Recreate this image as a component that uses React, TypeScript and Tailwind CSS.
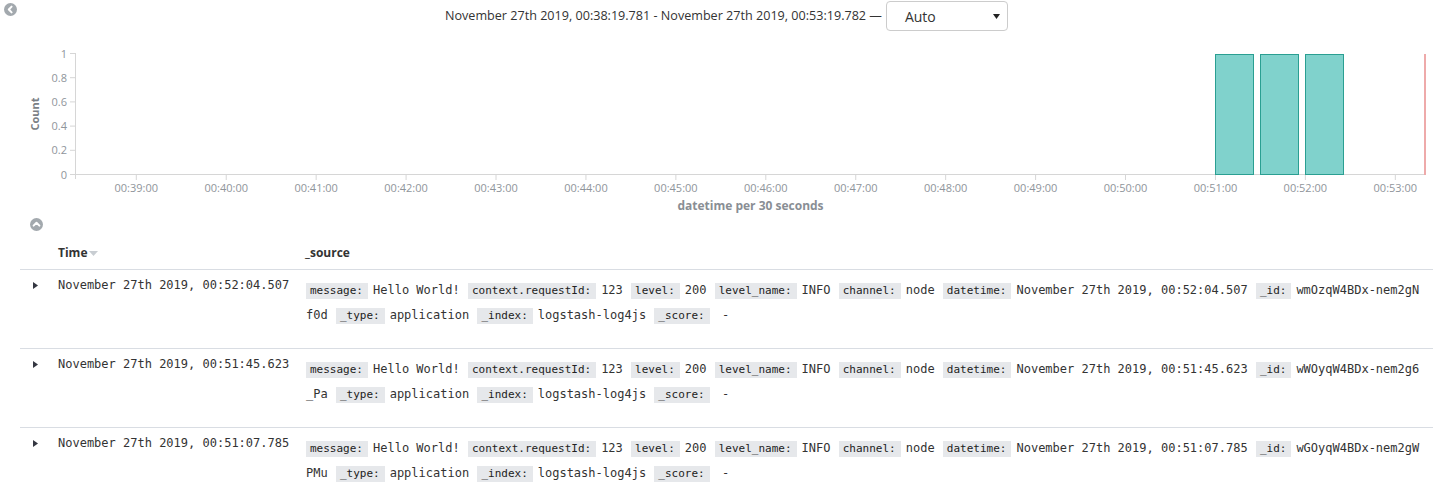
import React from "react";

const SANS = { fontFamily: '"Open Sans", "Noto Sans", Arial, sans-serif' } as const;

type Row = { time: string; id: string };
const rows: Row[] = [
  { time: "November 27th 2019, 00:52:04.507", id: "wmOzqW4BDx-nem2gNf0d" },
  { time: "November 27th 2019, 00:51:45.623", id: "wWOyqW4BDx-nem2g6_Pa" },
  { time: "November 27th 2019, 00:51:07.785", id: "wGOyqW4BDx-nem2gWPMu" },
];

function CircleIcon({ dir }: { dir: "left" | "up" }) {
  return (
    <svg width="13" height="13" viewBox="0 0 13 13">
      <circle cx="6.5" cy="6.5" r="6.5" fill="#a3a9ae" />
      {dir === "left" ? (
        <path d="M7.6 3.6 L4.8 6.5 L7.6 9.4" stroke="#fff" strokeWidth="2" fill="none" strokeLinecap="round" strokeLinejoin="round" />
      ) : (
        <path d="M3.6 7.6 L6.5 4.8 L9.4 7.6" stroke="#fff" strokeWidth="2" fill="none" strokeLinecap="round" strokeLinejoin="round" />
      )}
    </svg>
  );
}

function Chart() {
  const yTicks = [
    { v: "1", y: 53.5 },
    { v: "0.8", y: 77.7 },
    { v: "0.6", y: 101.9 },
    { v: "0.4", y: 126.1 },
    { v: "0.2", y: 150.3 },
    { v: "0", y: 174.5 },
  ];
  const xTicks = Array.from({ length: 15 }, (_, i) => ({
    label: `00:${String(39 + i).padStart(2, "0")}:00`,
    x: 136.3 + i * 89.93,
  }));
  const bars = [
    [1215.5, 1253.5],
    [1260.5, 1298.5],
    [1305.5, 1343.5],
  ];
  return (
    <svg width="1439" height="183" viewBox="0 32 1439 183" className="block">
      <text
        transform="translate(39 114) rotate(-90)"
        textAnchor="middle"
        fontSize="11"
        fontWeight="700"
        fill="#7b7f85"
        style={SANS}
      >
        Count
      </text>
      <line x1="75.5" y1="53" x2="75.5" y2="179" stroke="#d6d6d6" />
      {yTicks.map((t) => (
        <g key={t.v}>
          <line x1="70" y1={t.y} x2="75.5" y2={t.y} stroke="#d6d6d6" />
          <text x="67" y={t.y + 4} textAnchor="end" fontSize="11" fill="#8f959b" style={SANS}>
            {t.v}
          </text>
        </g>
      ))}
      <line x1="75.5" y1="174.5" x2="1425" y2="174.5" stroke="#d6d6d6" />
      {xTicks.map((t) => (
        <g key={t.label}>
          <line x1={t.x} y1="174.5" x2={t.x} y2="180" stroke="#d6d6d6" />
          <text x={t.x} y="191.5" textAnchor="middle" fontSize="11" fill="#8f959b" style={SANS}>
            {t.label}
          </text>
        </g>
      ))}
      {bars.map(([a, b]) => (
        <rect key={a} x={a} y="54.5" width={b - a} height="120" fill="#80d2cc" stroke="#2a9f92" strokeWidth="1" />
      ))}
      <line x1="1425" y1="54" x2="1425" y2="175" stroke="#eeaaaa" strokeWidth="2" />
      <text x="750.5" y="209.5" textAnchor="middle" fontSize="12" fontWeight="700" fill="#898e94" style={SANS}>
        datetime per 30 seconds
      </text>
    </svg>
  );
}

function Label({ k }: { k: string }) {
  return (
    <span className="inline-block bg-[#e6e8eb] pl-[4px] pr-[5px] text-[11px] leading-[16px] text-[#222]">{k}</span>
  );
}

function Field({ k, v }: { k: string; v: string }) {
  return (
    <>
      <Label k={k} />
      <span className="ml-[5px] mr-[1px]">{v}</span>{" "}
    </>
  );
}

function LogRow({ row }: { row: Row }) {
  const idHead = row.id.slice(0, 17);
  const idTail = row.id.slice(17);
  return (
    <div className="grid grid-cols-[30px_248px_1fr] border-b border-[#d9dde3] pt-[8px] pb-[20px]">
      <div className="pl-[13px] pt-[4px]">
        <svg width="5" height="7" viewBox="0 0 5 7">
          <path d="M0 0 L5 3.5 L0 7 Z" fill="#343741" />
        </svg>
      </div>
      <div
        className="pl-[8px] text-[12px] leading-[14px] text-[#333] whitespace-nowrap"
        style={{ fontFamily: '"DejaVu Sans Mono", monospace' }}
      >
        {row.time}
      </div>
      <div
        className="pl-[8px] pr-[11px] text-[12px] leading-[25px] text-[#333] break-all"
        style={{ fontFamily: '"DejaVu Sans Mono", monospace' }}
      >
        <Field k="message:" v="Hello World!" />
        <Field k="context.requestId:" v="123" />
        <Field k="level:" v="200" />
        <Field k="level_name:" v="INFO" />
        <Field k="channel:" v="node" />
        <Field k="datetime:" v={row.time} />
        <Label k="_id:" />
        <span className="ml-[5px]">{idHead}</span>
        <span className="mr-[1px]">{idTail}</span>{" "}
        <Field k="_type:" v="application" />
        <Field k="_index:" v="logstash-log4js" />
        <Field k="_score:" v={"\u00a0-"} />
      </div>
    </div>
  );
}

export default function App() {
  return (
    <div className="w-[1439px] h-[499px] overflow-hidden bg-white" style={SANS}>
      <div className="flex items-center h-[32px]">
        <div className="ml-[4px] -mt-[14px]">
          <CircleIcon dir="left" />
        </div>
        <div className="ml-[428px] text-[12.6px] text-[#333] whitespace-nowrap">
          November 27th 2019, 00:38:19.781 - November 27th 2019, 00:53:19.782 —
        </div>
        <div className="ml-[4px] w-[122px] h-[30px] border border-[#cccccc] rounded-[4px] flex items-center pl-[18px] pr-[7px] text-[14px] text-[#333]">
          <span>Auto</span>
          <svg className="ml-auto" width="7" height="5" viewBox="0 0 7 5">
            <path d="M0 0 L7 0 L3.5 5 Z" fill="#222" />
          </svg>
        </div>
      </div>
      <Chart />
      <div className="h-[18px] pl-[30px] pt-[3px]">
        <CircleIcon dir="up" />
      </div>
      <div className="ml-[20px] w-[1413px]">
        <div className="grid grid-cols-[30px_248px_1fr] h-[37px] border-b border-[#d9dde3] text-[12px] font-bold text-[#333] leading-[16px]">
          <div />
          <div className="pl-[8px] pt-[12px] flex items-start">
            <span>Time</span>
            <svg className="ml-[2px] mt-[6px]" width="9" height="5" viewBox="0 0 9 5">
              <path d="M0 0 L9 0 L4.5 5 Z" fill="#c8cdd2" />
            </svg>
          </div>
          <div className="pl-[7px] pt-[12px]">_source</div>
        </div>
        {rows.map((r) => (
          <LogRow key={r.id} row={r} />
        ))}
      </div>
    </div>
  );
}
